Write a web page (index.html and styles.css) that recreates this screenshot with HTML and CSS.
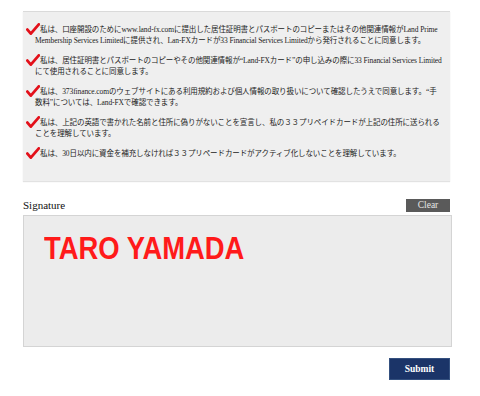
FILE: index.html
```html
<!DOCTYPE html>
<html lang="ja">
<head>
<meta charset="utf-8">
<link rel="stylesheet" href="styles.css">
</head>
<body>
<div class="page">
  <section class="terms">
    <p><svg class="check" viewBox="0 0 14 12"><path d="M1.4 6.6 L4.8 10.6 L12.8 1.4" /></svg>私は、口座開設のためにwww.land-fx.comに提出した居住証明書とパスポートのコピーまたはその他関連情報がLand Prime<br>Membership Services Limitedに提供され、Lan-FXカードが33 Financial Services Limitedから発行されることに同意します。</p>
    <p><svg class="check" viewBox="0 0 14 12"><path d="M1.4 6.6 L4.8 10.6 L12.8 1.4" /></svg>私は、居住証明書とパスポートのコピーやその他関連情報が“Land-FXカード”の申し込みの際に33 Financial Services Limited<br>にて使用されることに同意します。</p>
    <p><svg class="check" viewBox="0 0 14 12"><path d="M1.4 6.6 L4.8 10.6 L12.8 1.4" /></svg>私は、373finance.comのウェブサイトにある利用規約および個人情報の取り扱いについて確認したうえで同意します。“手<br>数料”については、Land-FXで確認できます。</p>
    <p><svg class="check" viewBox="0 0 14 12"><path d="M1.4 6.6 L4.8 10.6 L12.8 1.4" /></svg>私は、上記の英語で書かれた名前と住所に偽りがないことを宣言し、私の３３プリペイドカードが上記の住所に送られる<br>ことを理解しています。</p>
    <p><svg class="check" viewBox="0 0 14 12"><path d="M1.4 6.6 L4.8 10.6 L12.8 1.4" /></svg>私は、30日以内に資金を補充しなければ３３プリペードカードがアクティブ化しないことを理解しています。</p>
  </section>

  <div class="sig-head">
    <span class="sig-label">Signature</span>
    <button class="btn-clear" type="button">Clear</button>
  </div>
  <div class="sig-box">
    <span class="sig-text">TARO YAMADA</span>
  </div>

  <div class="actions">
    <button class="btn-submit" type="button">Submit</button>
  </div>
</div>
</body>
</html>
```

FILE: styles.css
```css
html, body {
  margin: 0;
  padding: 0;
  background: #ffffff;
}

.page {
  width: 429px;
  padding: 11px 0 0 23px;
  font-family: "Liberation Serif", "Noto Sans CJK JP", serif;
  color: #222;
}

.terms {
  width: 427px;
  box-sizing: border-box;
  background: #efefef;
  border-top: 1px solid #dadada;
  box-shadow: 0 1px 1px #e2e2e2;
  padding: 11px 4px 14px 12px;
}

.terms p {
  margin: 0 0 8px;
  font-size: 7.5px;
  line-height: 11px;
  color: #222;
  white-space: nowrap;
  letter-spacing: -0.1px;
}

.check {
  display: inline-block;
  width: 14px;
  height: 12px;
  margin-left: -9px;
  vertical-align: -3px;
}

.check path {
  fill: none;
  stroke: #e3101a;
  stroke-width: 2.8;
  stroke-linecap: round;
  stroke-linejoin: round;
}

.sig-head {
  display: flex;
  justify-content: space-between;
  align-items: flex-end;
  width: 427px;
  margin-top: 18px;
}

.sig-label {
  font-size: 11px;
  line-height: 13px;
  color: #111;
}

.btn-clear {
  width: 44px;
  height: 13px;
  padding: 0;
  border: none;
  background: #5a5a5a;
  color: #e6e6e6;
  font-family: "Liberation Serif", serif;
  font-size: 9.5px;
  line-height: 13px;
}

.sig-box {
  margin-top: 3px;
  width: 429px;
  height: 132px;
  box-sizing: border-box;
  background: #ececec;
  border: 1px solid #d4d4d4;
  padding: 16px 0 0 20px;
  overflow: hidden;
}

.sig-text {
  display: inline-block;
  font-family: "Liberation Sans", Arial, sans-serif;
  font-weight: bold;
  font-size: 32px;
  line-height: 32px;
  color: #ff1a1a;
  transform: scaleX(0.856);
  transform-origin: left center;
  white-space: nowrap;
}

.actions {
  display: flex;
  justify-content: flex-end;
  width: 427px;
  margin-top: 11px;
}

.btn-submit {
  width: 61px;
  height: 22px;
  padding: 0;
  border: 1px solid #34507f;
  background: #1b3468;
  color: #ffffff;
  font-family: "Liberation Serif", serif;
  font-weight: bold;
  font-size: 9.5px;
}
```
